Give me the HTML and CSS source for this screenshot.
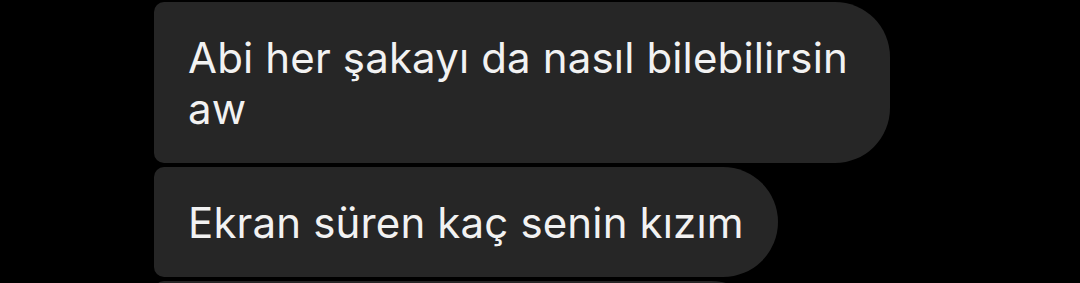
FILE: index.html
```html
<!DOCTYPE html>
<html lang="tr">
<head>
<meta charset="utf-8">
<link rel="stylesheet" href="styles.css">
</head>
<body>
<div class="thread">
  <div class="bubble">Abi her şakayı da nasıl bilebilirsin aw</div>
  <div class="bubble">Ekran süren kaç senin kızım</div>
  <div class="bubble bubble-next"></div>
</div>
</body>
</html>
```
FILE: styles.css
```css
html, body {
  margin: 0;
  padding: 0;
  background: #000;
  overflow: hidden;
}
.thread {
  display: flex;
  flex-direction: column;
  align-items: flex-start;
  gap: 4px;
  padding: 2px 0 0 154px;
}
.bubble {
  box-sizing: border-box;
  max-width: 736px;
  background: #262626;
  color: #f2f2f2;
  font-family: Inter, "Noto Sans", sans-serif;
  font-size: 42px;
  line-height: 51px;
  letter-spacing: 0.15px;
  padding: 30px 34px 29px 34px;
  border-radius: 10px 55px 55px 10px;
}
.bubble-next {
  width: 612px;
  height: 110px;
}
```
